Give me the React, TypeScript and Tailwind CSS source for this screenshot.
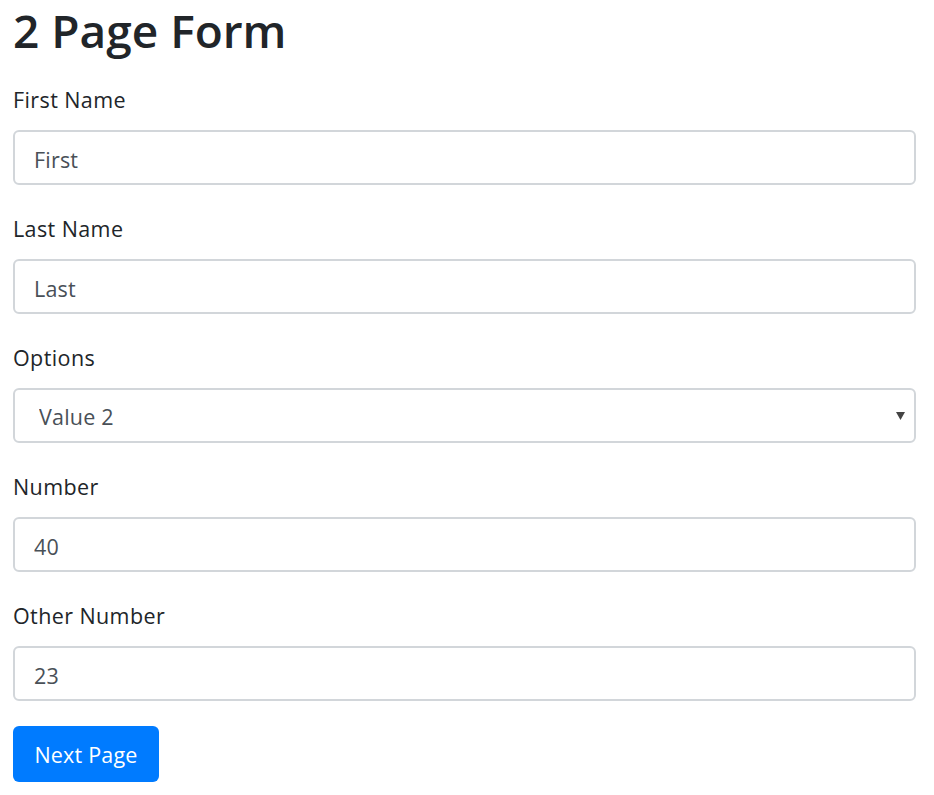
import { useState } from 'react';

const font = { fontFamily: '"Open Sans", "Noto Sans", sans-serif' };

const labelCls = 'mb-[15px] block text-[21.5px] leading-[30px] tracking-[0.4px] text-[#212529]';
const inputCls =
  'block h-[55px] w-full rounded-[6px] border-2 border-[#d2d6da] bg-white px-[19px] pt-[3px] text-[21.5px] tracking-[0.2px] text-[#495057] outline-none';

function Field({
  label,
  value,
  onChange,
  last = false,
}: {
  label: string;
  value: string;
  onChange: (v: string) => void;
  last?: boolean;
}) {
  return (
    <div className={last ? 'mb-[25px]' : 'mb-[29px]'}>
      <label className={labelCls}>{label}</label>
      <input
        type="text"
        value={value}
        onChange={(e) => onChange(e.target.value)}
        className={inputCls}
        style={font}
      />
    </div>
  );
}

export default function App() {
  const [first, setFirst] = useState('First');
  const [lastName, setLastName] = useState('Last');
  const [option, setOption] = useState('2');
  const [num, setNum] = useState('40');
  const [other, setOther] = useState('23');

  return (
    <div className="min-h-[795px] bg-white pl-[13px] pr-[18px]" style={font}>
      <h1 className="mb-[25px] text-[46px] font-semibold leading-[60px] text-[#212529]">2 Page Form</h1>
      <form onSubmit={(e) => e.preventDefault()}>
        <Field label="First Name" value={first} onChange={setFirst} />
        <Field label="Last Name" value={lastName} onChange={setLastName} />
        <div className="mb-[29px]">
          <label className={labelCls}>Options</label>
          <div className="relative">
            <select
              value={option}
              onChange={(e) => setOption(e.target.value)}
              className="block h-[55px] w-full appearance-none rounded-[6px] border-2 border-[#d2d6da] bg-white pl-[24px] pt-[3px] text-[21.5px] tracking-[0.2px] text-[#495057] outline-none"
              style={font}
            >
              <option value="1">Value 1</option>
              <option value="2">Value 2</option>
              <option value="3">Value 3</option>
            </select>
            <svg
              className="pointer-events-none absolute right-[11px] top-[24px]"
              width="9"
              height="8"
              viewBox="0 0 9 8"
            >
              <path d="M0 0h9L4.5 8z" fill="#444" />
            </svg>
          </div>
        </div>
        <Field label="Number" value={num} onChange={setNum} />
        <Field label="Other Number" value={other} onChange={setOther} last />
        <button
          type="submit"
          className="h-[56px] w-[146px] rounded-[6px] bg-[#007bff] pt-[3px] text-[21.5px] tracking-[0.2px] text-white"
          style={font}
        >
          Next Page
        </button>
      </form>
    </div>
  );
}
